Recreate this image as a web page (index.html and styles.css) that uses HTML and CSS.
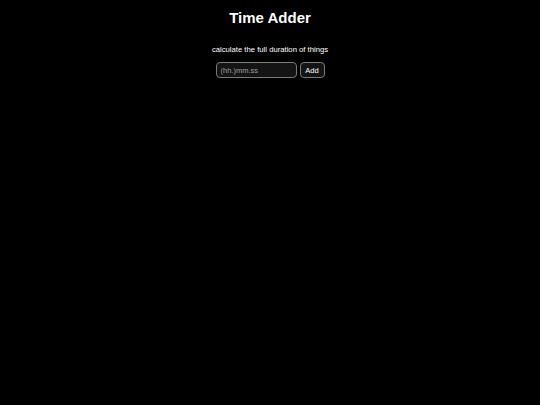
FILE: index.html
```html
<!DOCTYPE html>
<html>
<head>
<meta charset="utf-8">
<link rel="stylesheet" href="styles.css">
</head>
<body>
<main class="app">
  <h1 class="title">Time Adder</h1>
  <p class="subtitle">calculate the full duration of things</p>
  <form class="row">
    <input class="time-input" type="text" placeholder="(hh.)mm.ss">
    <button class="add-btn" type="button">Add</button>
  </form>
</main>
</body>
</html>
```
FILE: styles.css
```css
html, body {
  margin: 0;
  padding: 0;
  background: #000;
  color: #fff;
  font-family: "Liberation Sans", Arial, sans-serif;
}
.app {
  display: flex;
  flex-direction: column;
  align-items: center;
  padding-top: 9px;
}
.title {
  margin: 0;
  font-size: 15px;
  font-weight: bold;
  line-height: 18px;
}
.subtitle {
  margin: 18px 0 0;
  font-size: 7.7px;
  line-height: 10px;
}
.row {
  display: flex;
  gap: 3px;
  margin-top: 7px;
}
.time-input {
  box-sizing: border-box;
  width: 81px;
  height: 16px;
  padding: 0 4px;
  background: #141414;
  color: #fff;
  border: 1px solid #7a7a7a;
  border-radius: 4px;
  font-family: "Liberation Sans", Arial, sans-serif;
  font-size: 7.5px;
  outline: none;
}
.time-input::placeholder {
  color: #a0a0a0;
}
.add-btn {
  box-sizing: border-box;
  width: 25px;
  height: 16px;
  padding: 0;
  background: #141414;
  color: #fff;
  border: 1px solid #7a7a7a;
  border-radius: 4px;
  font-family: "Liberation Sans", Arial, sans-serif;
  font-size: 7.5px;
}
```
